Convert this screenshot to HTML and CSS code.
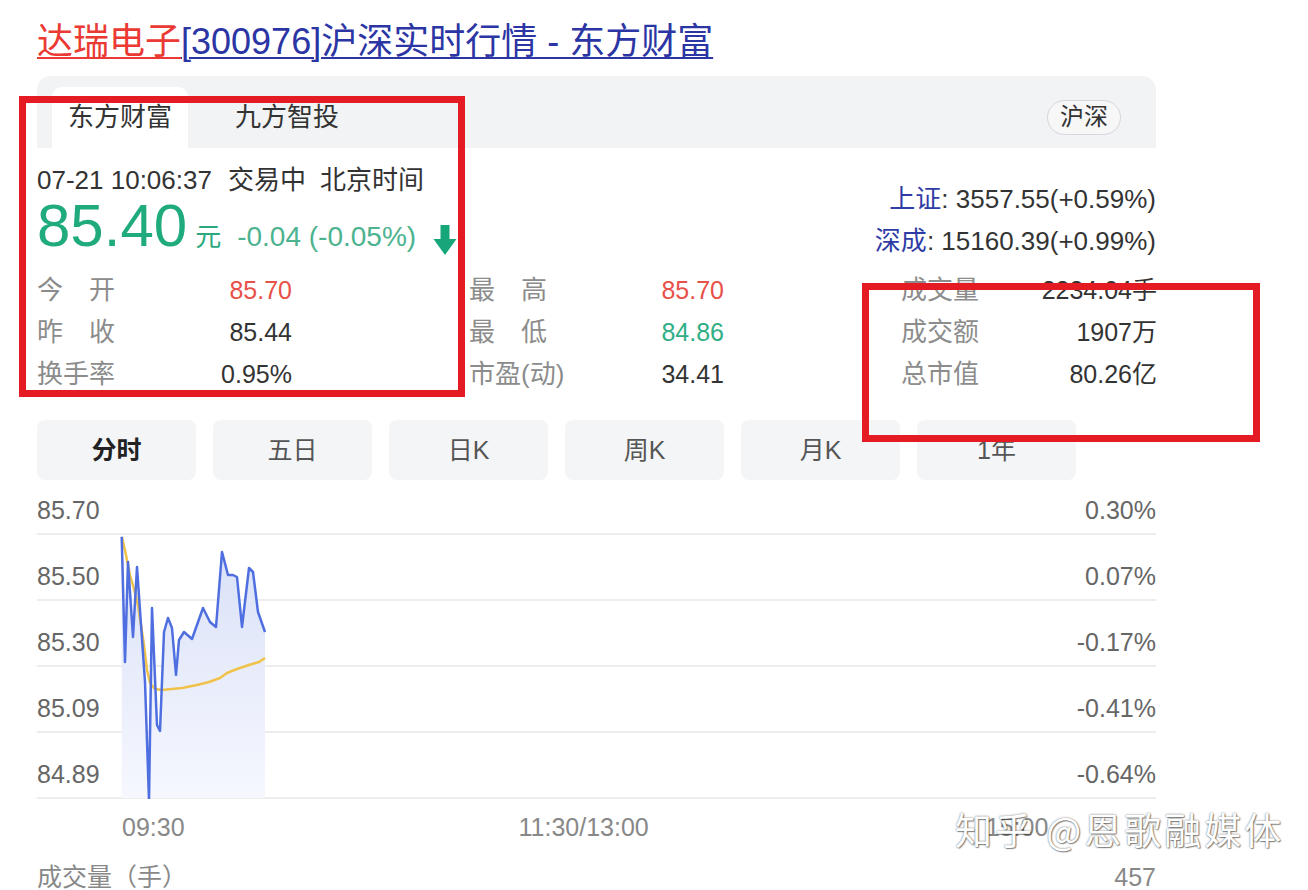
FILE: index.html
```html
<!DOCTYPE html>
<html lang="zh-CN">
<head>
<meta charset="utf-8">
<title>达瑞电子[300976]沪深实时行情 - 东方财富</title>
<link rel="stylesheet" href="styles.css">
</head>
<body>
<div class="page">
  <h1 class="title"><a class="t-red" href="#">达瑞电子</a><a class="t-blue" href="#">[300976]沪深实时行情 - 东方财富</a></h1>

  <div class="card-head">
    <div class="tabs">
      <span class="tab active">东方财富</span>
      <span class="tab">九方智投</span>
    </div>
    <span class="pill">沪深</span>
  </div>

  <div class="quote">
    <div class="q-left">
      <div class="time">07-21 10:06:37<span class="gap">交易中</span><span class="gap2">北京时间</span></div>
      <div class="price-row">
        <span class="price">85.40</span><span class="unit">元</span><span class="chg">-0.04 (-0.05%)</span>
        <svg class="arrow" width="24" height="30" viewBox="0 0 24 30"><path d="M7.5 0H16.5V14H23.5L12 30L0.5 14H7.5Z" fill="#17a67a"/></svg>
      </div>
    </div>
    <div class="q-right">
      <div class="idx"><span class="idx-name">上证</span>: 3557.55(+0.59%)</div>
      <div class="idx"><span class="idx-name">深成</span>: 15160.39(+0.99%)</div>
    </div>
  </div>

  <div class="stats">
    <div class="cell"><span class="lbl">今　开</span><span class="val red">85.70</span></div>
    <div class="cell"><span class="lbl">最　高</span><span class="val red">85.70</span></div>
    <div class="cell"><span class="lbl">成交量</span><span class="val">2234.04手</span></div>
    <div class="cell"><span class="lbl">昨　收</span><span class="val">85.44</span></div>
    <div class="cell"><span class="lbl">最　低</span><span class="val green">84.86</span></div>
    <div class="cell"><span class="lbl">成交额</span><span class="val">1907万</span></div>
    <div class="cell"><span class="lbl">换手率</span><span class="val">0.95%</span></div>
    <div class="cell"><span class="lbl">市盈(动)</span><span class="val">34.41</span></div>
    <div class="cell"><span class="lbl">总市值</span><span class="val">80.26亿</span></div>
  </div>

  <div class="periods">
    <span class="pbtn on">分时</span>
    <span class="pbtn">五日</span>
    <span class="pbtn">日K</span>
    <span class="pbtn">周K</span>
    <span class="pbtn">月K</span>
    <span class="pbtn">1年</span>
  </div>

  <div class="chart">
    <div class="row first"><span>85.70</span><span>0.30%</span></div>
    <div class="row"><span>85.50</span><span>0.07%</span></div>
    <div class="row"><span>85.30</span><span>-0.17%</span></div>
    <div class="row"><span>85.09</span><span>-0.41%</span></div>
    <div class="row"><span>84.89</span><span>-0.64%</span></div>
    <svg class="plot" width="1119" height="314" viewBox="0 0 1119 314">
      <defs>
        <linearGradient id="fillg" x1="0" y1="0" x2="0" y2="1">
          <stop offset="0" stop-color="#d9e0f8"/>
          <stop offset="1" stop-color="#f6f8fe"/>
        </linearGradient>
      </defs>
      <polygon fill="url(#fillg)" points="84.7,51.7 88,177 91,77 96,152 100,82 108,197 112,315 115,123 120,240 123,246 127,147 131,133 135,143 139,190 142,155 147,147 155,154 166,123 173,137 179,142 185,67 191,90 196,90 200,92 205,142 212,83 216,87 221,127 228,147 228,313 84.7,313"/>
      <polyline fill="none" stroke="#f0c24a" stroke-width="2.5" stroke-linejoin="round" points="85,52 89,70 93,90 97,104 101,120 104,140 107,160 110,185 113,198 118,204 125,205 135,204 145,203 160,200 172,197 183,193 190,188 200,184 212,180 222,177 228,173"/>
      <polyline fill="none" stroke="#4f6fe0" stroke-width="2.5" stroke-linejoin="round" points="84.7,51.7 88,177 91,77 96,152 100,82 108,197 112,315 115,123 120,240 123,246 127,147 131,133 135,143 139,190 142,155 147,147 155,154 166,123 173,137 179,142 185,67 191,90 196,90 200,92 205,142 212,83 216,87 221,127 228,147"/>
    </svg>
  </div>

  <div class="xaxis">
    <span class="x1">09:30</span>
    <span class="x2">11:30/13:00</span>
    <span class="x3">15:00</span>
  </div>

  <div class="vol-head"><span>成交量（手）</span><span>457</span></div>
</div>

<div class="mark mark-1"></div>
<div class="mark mark-2"></div>
<div class="watermark">知乎 @恩歌融媒体</div>
</body>
</html>
```

FILE: styles.css
```css
html, body {
  margin: 0;
  padding: 0;
  overflow: hidden;
  background: #fff;
}
body {
  font-family: "Liberation Sans", "Noto Sans CJK SC", sans-serif;
  color: #333;
  position: relative;
  width: 1308px;
  height: 890px;
}
.page {
  width: 1119px;
  padding-left: 37px;
}

.title {
  margin: 0;
  padding-top: 20px;
  font-size: 36px;
  line-height: 44px;
  font-weight: normal;
  white-space: nowrap;
}
.title a { text-decoration: underline; text-decoration-thickness: 2px; text-underline-offset: 3px; }
.t-red { color: #ea3a33; }
.t-blue { color: #2b35a4; }

.card-head {
  margin-top: 12px;
  height: 72px;
  background: #f2f3f5;
  border-radius: 14px 14px 0 0;
  display: flex;
  align-items: flex-end;
  justify-content: space-between;
  padding: 0 35px 0 15px;
}
.tabs { display: flex; gap: 31px; }
.tab {
  height: 61px;
  line-height: 61px;
  padding: 0 16px;
  font-size: 26px;
  color: #333;
  border-radius: 10px 10px 0 0;
}
.tab.active { background: #fff; }
.pill {
  margin-bottom: 13px;
  height: 35px;
  line-height: 32px;
  box-sizing: border-box;
  padding: 0 12px;
  border: 1.5px solid #d4d6db;
  border-radius: 18px;
  background: #f7f7f8;
  font-size: 24px;
  color: #333;
}

.quote {
  display: flex;
  justify-content: space-between;
  padding-top: 16px;
}
.time {
  font-size: 26px;
  line-height: 32px;
  color: #333;
}
.time .gap { margin-left: 16px; }
.time .gap2 { margin-left: 14px; }
.price-row {
  height: 60px;
  display: flex;
  align-items: baseline;
  line-height: 60px;
}
.price {
  font-size: 60px;
  color: #1fab7d;
}
.unit {
  margin-left: 8px;
  font-size: 26px;
  color: #2aa97e;
}
.chg {
  margin-left: 16px;
  font-size: 28px;
  color: #4db38f;
}
.arrow {
  margin-left: 17px;
  align-self: flex-end;
  margin-bottom: 1px;
}
.q-right {
  padding-top: 14px;
  text-align: right;
}
.idx {
  font-size: 26px;
  line-height: 42px;
  color: #333;
}
.idx-name { color: #2f3ca6; }

.stats {
  margin-top: 7px;
  display: grid;
  grid-template-columns: 255px 255px 256px;
  column-gap: 177px;
}
.stats .cell {
  display: flex;
  justify-content: space-between;
  font-size: 25px;
  line-height: 42px;
}
.lbl { color: #8c8c8c; font-size: 26px; }
.val { color: #333; }
.val.red { color: #e8504a; }
.val.green { color: #31ae86; }

.periods {
  margin-top: 25px;
  display: flex;
  gap: 17px;
}
.pbtn {
  width: 159px;
  height: 60px;
  line-height: 60px;
  text-align: center;
  background: #f4f5f7;
  border-radius: 8px;
  font-size: 25px;
  color: #555;
}
.pbtn.on { color: #222; font-weight: bold; }

.chart {
  margin-top: 5px;
  position: relative;
}
.chart .row {
  height: 66px;
  box-sizing: border-box;
  border-bottom: 2px solid #ededee;
  display: flex;
  justify-content: space-between;
  align-items: flex-end;
  padding-bottom: 8px;
  font-size: 25px;
  line-height: 30px;
  color: #666;
}
.chart .row.first { height: 50px; }
.plot {
  position: absolute;
  left: 0;
  top: 0;
}

.xaxis {
  margin-top: 13px;
  display: flex;
  font-size: 25px;
  line-height: 30px;
  color: #888;
}
.x1 { margin-left: 85px; }
.x2 { margin-left: 334px; }
.x3 { margin-left: 337px; }

.vol-head {
  margin-top: 22px;
  display: flex;
  justify-content: space-between;
  font-size: 25px;
  line-height: 26px;
  color: #888;
}

.mark {
  position: absolute;
  box-sizing: border-box;
  border: 7px solid #e41b23;
}
.mark-1 { left: 19px; top: 96px; width: 446px; height: 301px; }
.mark-2 { left: 862px; top: 283px; width: 398px; height: 159px; }

.watermark {
  position: absolute;
  left: 955px;
  top: 804px;
  font-family: "Noto Sans CJK SC", sans-serif;
  font-size: 37px;
  line-height: 50px;
  color: #fff;
  letter-spacing: 3px;
  white-space: nowrap;
  text-shadow: 0 0 2px rgba(0,0,0,0.6), 1px 1px 1px rgba(0,0,0,0.4);
}
```
